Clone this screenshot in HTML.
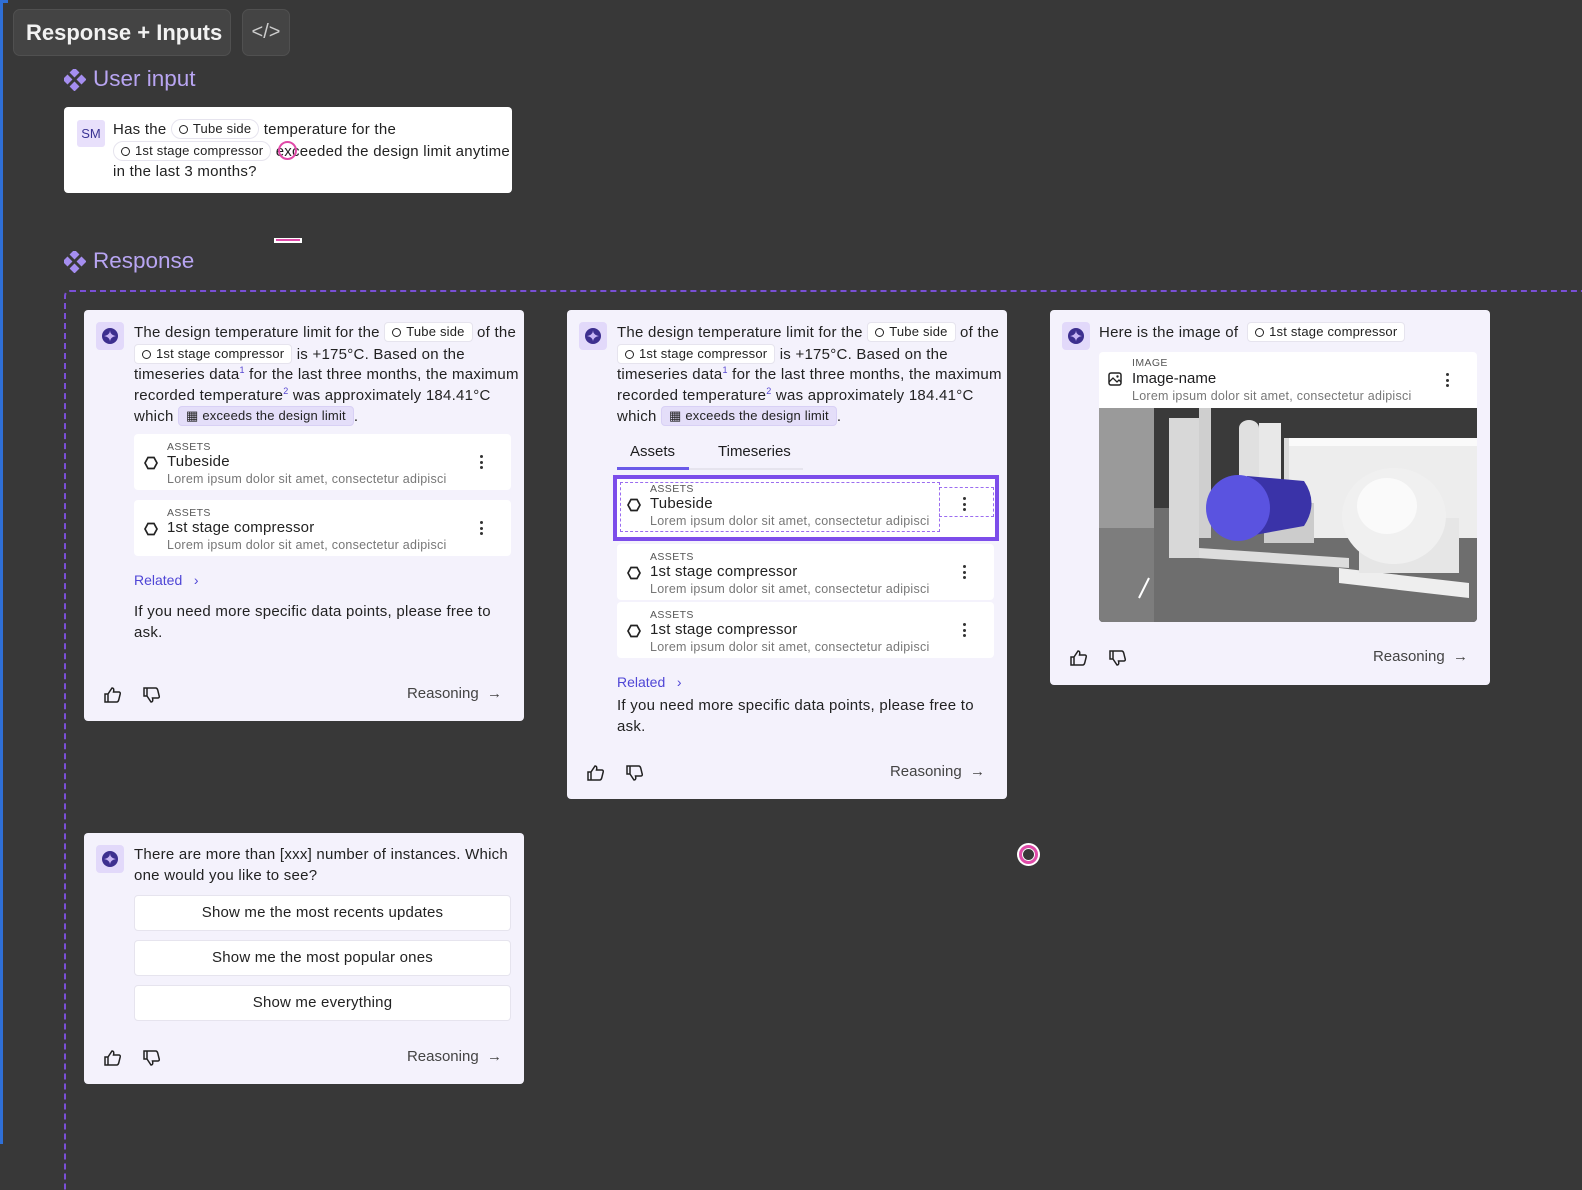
<!DOCTYPE html>
<html><head><meta charset="utf-8"><style>
*{box-sizing:border-box;margin:0;padding:0}
body{width:1582px;height:1144px;background:#383838;font-family:"Liberation Sans",sans-serif;position:relative;overflow:hidden;color:#1d1d1f}
.abs{position:absolute}
.card{position:absolute;background:#f4f2fc;border-radius:4px}
.av{position:absolute;left:12px;top:12px;width:28px;height:28px;background:#e2d9fa;border-radius:4px}
.txt{position:absolute;font-size:15px;letter-spacing:.25px;line-height:20.5px;color:#222;white-space:nowrap}
.chip{display:inline-block;background:#fff;border:1px solid #e6e4ee;border-radius:4px;padding:0 7px;font-size:13px;letter-spacing:.2px;line-height:18px;vertical-align:1px}
.chip i{display:inline-block;width:9px;height:9px;border:1.5px solid #222;border-radius:50%;margin-right:5px;vertical-align:-1px}
.chip.p{background:#e4def9;border-color:#d8d0f5}
sup{font-size:9px;color:#5546d0;line-height:0}
.item{position:absolute;background:#fff;border-radius:4px;height:56px}
.item .lab{position:absolute;left:33px;top:7px;font-size:10.5px;color:#555;letter-spacing:.4px}
.item .t{position:absolute;left:33px;top:19px;font-size:15px;letter-spacing:.2px;color:#222}
.item .d{position:absolute;left:33px;top:38px;font-size:12.5px;letter-spacing:.25px;color:#777;white-space:nowrap}
.item .hx{position:absolute;left:10px;top:22px}
.item .dots{position:absolute;right:28px;top:21px;width:3px}
.item .dots b{display:block;width:3px;height:3px;background:#333;border-radius:50%;margin-bottom:2.5px}
.rel{position:absolute;font-size:14px;color:#4f46d6}
.foot{position:absolute;left:0;right:0;height:20px}
.reas{position:absolute;right:22px;top:0;font-size:15px;color:#444}
.btn{position:absolute;left:50px;width:377px;height:36px;background:#fff;border:1px solid #e6e4ee;border-radius:4px;text-align:center;line-height:34px;font-size:15px;letter-spacing:.2px;color:#222}
</style></head><body>
<div class="abs" style="left:0;top:0;width:3px;height:1144px;background:#2f6fd6"></div>
<div class="abs" style="left:0;top:0;width:8px;height:3px;background:#2f6fd6"></div>
<div class="abs" style="left:13px;top:9px;width:218px;height:47px;background:#444;border:1px solid #505050;border-radius:7px;color:#f2f2f2;font-size:22px;line-height:45px;padding-left:12px;font-weight:600">Response + Inputs</div>
<div class="abs" style="left:242px;top:9px;width:48px;height:47px;background:#444;border:1px solid #505050;border-radius:7px;color:#ccc;font-size:20px;line-height:45px;text-align:center">&lt;/&gt;</div>

<svg class="abs" style="left:64px;top:69px" width="22" height="22" viewBox="0 0 22 22"><g fill="#a58ef0"><rect x="7" y="0" width="7" height="7" transform="rotate(45 10.5 3.5)"/><rect x="7" y="14" width="7" height="7" transform="rotate(45 10.5 17.5)"/><rect x="0" y="7" width="7" height="7" transform="rotate(45 3.5 10.5)"/><rect x="14" y="7" width="7" height="7" transform="rotate(45 17.5 10.5)"/></g></svg>
<div class="abs" style="left:93px;top:66px;font-size:22.5px;color:#b8a5f2">User input</div>

<div class="abs" style="left:64px;top:107px;width:448px;height:86px;background:#fff;border-radius:4px">
<div class="abs" style="left:13px;top:13px;width:28px;height:27px;background:#e8e0fb;border-radius:3px;font-size:13px;color:#3b3494;text-align:center;line-height:27px">SM</div>
<div class="txt" style="left:49px;top:12px">Has the <span class="chip" style="border-radius:10px"><i></i>Tube side</span> temperature for the<br><span class="chip" style="border-radius:10px"><i></i>1st stage compressor</span> exceeded the design limit anytime<br>in the last 3 months?</div>
</div>
<div class="abs" style="left:278px;top:141px;width:19px;height:19px;border:2px solid #e04aa8;border-radius:50%"></div>
<div class="abs" style="left:274px;top:238px;width:28px;height:5px;background:#fff"></div>
<div class="abs" style="left:276px;top:239px;width:24px;height:2px;background:#e04aa8"></div>

<svg class="abs" style="left:64px;top:251px" width="22" height="22" viewBox="0 0 22 22"><g fill="#a58ef0"><rect x="7" y="0" width="7" height="7" transform="rotate(45 10.5 3.5)"/><rect x="7" y="14" width="7" height="7" transform="rotate(45 10.5 17.5)"/><rect x="0" y="7" width="7" height="7" transform="rotate(45 3.5 10.5)"/><rect x="14" y="7" width="7" height="7" transform="rotate(45 17.5 10.5)"/></g></svg>
<div class="abs" style="left:93px;top:248px;font-size:22.5px;color:#b8a5f2">Response</div>

<div class="abs" style="left:64px;top:290px;width:1530px;height:900px;border:2px dashed #7a4fd6;border-right:none;border-bottom:none;border-top-left-radius:6px"></div>

<!-- Card 1 -->
<div class="card" style="left:84px;top:310px;width:440px;height:411px">
<div class="av"><svg width="28" height="28"><circle cx="14" cy="14" r="8" fill="#3d2f8f"/><path d="M8 14 Q14 13 14 8 Q14 13 20 14 Q14 15 14 20 Q14 15 8 14Z" fill="#c8b5f5"/></svg></div>
<div class="txt" style="left:50px;top:12px">The design temperature limit for the <span class="chip"><i></i>Tube side</span> of the<br><span class="chip"><i></i>1st stage compressor</span> is +175°C. Based on the<br>timeseries data<sup>1</sup> for the last three months, the maximum<br>recorded temperature<sup>2</sup> was approximately 184.41°C<br>which <span class="chip p">▦ exceeds the design limit</span>.</div>
<div class="item" style="left:50px;top:124px;width:377px"><svg class="hx" width="14" height="14"><polygon points="4,1.5 10,1.5 13,7 10,12.5 4,12.5 1,7" fill="none" stroke="#222" stroke-width="1.7"/></svg><div class="lab">ASSETS</div><div class="t">Tubeside</div><div class="d">Lorem ipsum dolor sit amet, consectetur adipisci</div><div class="dots"><b></b><b></b><b></b></div></div>
<div class="item" style="left:50px;top:190px;width:377px"><svg class="hx" width="14" height="14"><polygon points="4,1.5 10,1.5 13,7 10,12.5 4,12.5 1,7" fill="none" stroke="#222" stroke-width="1.7"/></svg><div class="lab">ASSETS</div><div class="t">1st stage compressor</div><div class="d">Lorem ipsum dolor sit amet, consectetur adipisci</div><div class="dots"><b></b><b></b><b></b></div></div>
<div class="rel" style="left:50px;top:262px">Related &nbsp;&nbsp;›</div>
<div class="txt" style="left:50px;top:292px">If you need more specific data points, please free to<br>ask.</div>
<div class="foot" style="top:375px">
<svg class="abs" style="left:20px;top:2px" width="18" height="16" viewBox="0 0 18 16"><path d="M1 7h3v8H1zM4 7l4-6c2 0 2 2 1.5 4H15c1 0 1.5 1 1.2 2l-1.5 6c-.3 1-1 2-2 2H4" fill="none" stroke="#222" stroke-width="1.5"/></svg>
<svg class="abs" style="left:59px;top:2px" width="18" height="16" viewBox="0 0 18 16"><path d="M1 1h3v8H1zM4 9l4 6c2 0 2-2 1.5-4H15c1 0 1.5-1 1.2-2l-1.5-6c-.3-1-1-2-2-2H4" fill="none" stroke="#222" stroke-width="1.5"/></svg>
<div class="reas">Reasoning &nbsp;→</div></div>
</div>

<!-- Card 2 -->
<div class="card" style="left:567px;top:310px;width:440px;height:489px">
<div class="av"><svg width="28" height="28"><circle cx="14" cy="14" r="8" fill="#3d2f8f"/><path d="M8 14 Q14 13 14 8 Q14 13 20 14 Q14 15 14 20 Q14 15 8 14Z" fill="#c8b5f5"/></svg></div>
<div class="txt" style="left:50px;top:12px">The design temperature limit for the <span class="chip"><i></i>Tube side</span> of the<br><span class="chip"><i></i>1st stage compressor</span> is +175°C. Based on the<br>timeseries data<sup>1</sup> for the last three months, the maximum<br>recorded temperature<sup>2</sup> was approximately 184.41°C<br>which <span class="chip p">▦ exceeds the design limit</span>.</div>
<div class="abs" style="left:63px;top:133px;font-size:15px">Assets</div>
<div class="abs" style="left:151px;top:133px;font-size:15px">Timeseries</div>
<div class="abs" style="left:50px;top:158px;width:186px;height:2px;background:#e6e4ee"></div>
<div class="abs" style="left:50px;top:157px;width:72px;height:3px;background:#6a5ae8"></div>
<div class="abs" style="left:46px;top:165px;width:386px;height:66px;background:#fff;border:4px solid #7c4dea"></div>
<div class="abs" style="left:53px;top:172px;width:320px;height:50px;border:1.5px dashed #9b6cf0"></div>
<div class="abs" style="left:372px;top:177px;width:55px;height:30px;border:1.5px dashed #9b6cf0"></div>
<div class="item" style="left:50px;top:166px;width:377px;background:transparent"><svg class="hx" width="14" height="14"><polygon points="4,1.5 10,1.5 13,7 10,12.5 4,12.5 1,7" fill="none" stroke="#222" stroke-width="1.7"/></svg><div class="lab">ASSETS</div><div class="t">Tubeside</div><div class="d">Lorem ipsum dolor sit amet, consectetur adipisci</div><div class="dots"><b></b><b></b><b></b></div></div>
<div class="item" style="left:50px;top:234px;width:377px"><svg class="hx" width="14" height="14"><polygon points="4,1.5 10,1.5 13,7 10,12.5 4,12.5 1,7" fill="none" stroke="#222" stroke-width="1.7"/></svg><div class="lab">ASSETS</div><div class="t">1st stage compressor</div><div class="d">Lorem ipsum dolor sit amet, consectetur adipisci</div><div class="dots"><b></b><b></b><b></b></div></div>
<div class="item" style="left:50px;top:292px;width:377px"><svg class="hx" width="14" height="14"><polygon points="4,1.5 10,1.5 13,7 10,12.5 4,12.5 1,7" fill="none" stroke="#222" stroke-width="1.7"/></svg><div class="lab">ASSETS</div><div class="t">1st stage compressor</div><div class="d">Lorem ipsum dolor sit amet, consectetur adipisci</div><div class="dots"><b></b><b></b><b></b></div></div>
<div class="rel" style="left:50px;top:364px">Related &nbsp;&nbsp;›</div>
<div class="txt" style="left:50px;top:386px">If you need more specific data points, please free to<br>ask.</div>
<div class="foot" style="top:453px">
<svg class="abs" style="left:20px;top:2px" width="18" height="16" viewBox="0 0 18 16"><path d="M1 7h3v8H1zM4 7l4-6c2 0 2 2 1.5 4H15c1 0 1.5 1 1.2 2l-1.5 6c-.3 1-1 2-2 2H4" fill="none" stroke="#222" stroke-width="1.5"/></svg>
<svg class="abs" style="left:59px;top:2px" width="18" height="16" viewBox="0 0 18 16"><path d="M1 1h3v8H1zM4 9l4 6c2 0 2-2 1.5-4H15c1 0 1.5-1 1.2-2l-1.5-6c-.3-1-1-2-2-2H4" fill="none" stroke="#222" stroke-width="1.5"/></svg>
<div class="reas">Reasoning &nbsp;→</div></div>
</div>

<!-- Card 3 -->
<div class="card" style="left:1050px;top:310px;width:440px;height:375px">
<div class="av"><svg width="28" height="28"><circle cx="14" cy="14" r="8" fill="#3d2f8f"/><path d="M8 14 Q14 13 14 8 Q14 13 20 14 Q14 15 14 20 Q14 15 8 14Z" fill="#c8b5f5"/></svg></div>
<div class="txt" style="left:49px;top:12px">Here is the image of &nbsp;<span class="chip"><i></i>1st stage compressor</span></div>
<div class="abs" style="left:49px;top:42px;width:378px;height:270px;background:#fff;border-radius:4px;overflow:hidden">
<svg class="abs" style="left:9px;top:20px" width="14" height="14" viewBox="0 0 14 14"><rect x="1" y="1" width="12" height="12" rx="2" fill="none" stroke="#222" stroke-width="1.5"/><path d="M1 10l4-4 4 4 2-2 2 2" fill="none" stroke="#222" stroke-width="1.3"/><circle cx="9.5" cy="4.5" r="1.2" fill="#222"/></svg>
<div class="abs" style="left:33px;top:5px;font-size:10.5px;color:#555;letter-spacing:.4px">IMAGE</div>
<div class="abs" style="left:33px;top:18px;font-size:15px">Image-name</div>
<div class="abs" style="left:33px;top:37px;font-size:12.5px;letter-spacing:.25px;color:#777;white-space:nowrap">Lorem ipsum dolor sit amet, consectetur adipisci</div>
<div class="abs" style="right:28px;top:21px;width:3px"><b style="display:block;width:3px;height:3px;background:#333;border-radius:50%;margin-bottom:2.5px"></b><b style="display:block;width:3px;height:3px;background:#333;border-radius:50%;margin-bottom:2.5px"></b><b style="display:block;width:3px;height:3px;background:#333;border-radius:50%"></b></div>
<svg class="abs" style="left:0;top:56px" width="378" height="214" viewBox="0 0 378 214">
<rect width="378" height="214" fill="#3a3a3a"/>
<rect y="100" width="378" height="114" fill="#6e6e6e"/>
<rect x="0" y="0" width="55" height="165" fill="#9a9a9a"/>
<rect x="0" y="120" width="55" height="94" fill="#7d7d7d"/>
<rect x="70" y="10" width="30" height="140" fill="#d8d8d8"/>
<rect x="100" y="0" width="12" height="130" fill="#cfcfcf"/>
<rect x="140" y="20" width="20" height="80" fill="#e0e0e0"/>
<ellipse cx="150" cy="20" rx="10" ry="8" fill="#e0e0e0"/>
<rect x="160" y="15" width="22" height="80" fill="#e8e8e8"/>
<rect x="185" y="30" width="20" height="70" fill="#dcdcdc"/>
<rect x="190" y="30" width="188" height="100" fill="#ededed"/>
<rect x="190" y="30" width="188" height="8" fill="#fafafa"/>
<polygon points="100,140 250,150 250,160 100,150" fill="#ddd"/>
<polygon points="240,160 370,175 370,190 240,175" fill="#eee"/>
<rect x="165" y="95" width="50" height="40" fill="#ccc"/>
<path d="M148 68 L205 73 Q220 95 205 118 L150 128 Z" fill="#3a33a8"/>
<ellipse cx="139" cy="100" rx="32" ry="33" fill="#5a53e0"/>
<rect x="260" y="110" width="100" height="55" fill="#e6e6e6"/>
<ellipse cx="295" cy="108" rx="52" ry="48" fill="#f0f0f0"/>
<ellipse cx="288" cy="98" rx="30" ry="28" fill="#fafafa"/>
<line x1="40" y1="190" x2="50" y2="170" stroke="#fff" stroke-width="2"/>
</svg>
</div>
<div class="foot" style="top:338px">
<svg class="abs" style="left:20px;top:2px" width="18" height="16" viewBox="0 0 18 16"><path d="M1 7h3v8H1zM4 7l4-6c2 0 2 2 1.5 4H15c1 0 1.5 1 1.2 2l-1.5 6c-.3 1-1 2-2 2H4" fill="none" stroke="#222" stroke-width="1.5"/></svg>
<svg class="abs" style="left:59px;top:2px" width="18" height="16" viewBox="0 0 18 16"><path d="M1 1h3v8H1zM4 9l4 6c2 0 2-2 1.5-4H15c1 0 1.5-1 1.2-2l-1.5-6c-.3-1-1-2-2-2H4" fill="none" stroke="#222" stroke-width="1.5"/></svg>
<div class="reas">Reasoning &nbsp;→</div></div>
</div>

<!-- Card 4 -->
<div class="card" style="left:84px;top:833px;width:440px;height:251px">
<div class="av"><svg width="28" height="28"><circle cx="14" cy="14" r="8" fill="#3d2f8f"/><path d="M8 14 Q14 13 14 8 Q14 13 20 14 Q14 15 14 20 Q14 15 8 14Z" fill="#c8b5f5"/></svg></div>
<div class="txt" style="left:50px;top:12px">There are more than [xxx] number of instances. Which<br>one would you like to see?</div>
<div class="btn" style="top:62px">Show me the most recents updates</div>
<div class="btn" style="top:107px">Show me the most popular ones</div>
<div class="btn" style="top:152px">Show me everything</div>
<div class="foot" style="top:215px">
<svg class="abs" style="left:20px;top:2px" width="18" height="16" viewBox="0 0 18 16"><path d="M1 7h3v8H1zM4 7l4-6c2 0 2 2 1.5 4H15c1 0 1.5 1 1.2 2l-1.5 6c-.3 1-1 2-2 2H4" fill="none" stroke="#222" stroke-width="1.5"/></svg>
<svg class="abs" style="left:59px;top:2px" width="18" height="16" viewBox="0 0 18 16"><path d="M1 1h3v8H1zM4 9l4 6c2 0 2-2 1.5-4H15c1 0 1.5-1 1.2-2l-1.5-6c-.3-1-1-2-2-2H4" fill="none" stroke="#222" stroke-width="1.5"/></svg>
<div class="reas">Reasoning &nbsp;→</div></div>
</div>

<div class="abs" style="left:1017px;top:843px;width:23px;height:23px;border-radius:50%;background:#fff"></div>
<div class="abs" style="left:1019px;top:845px;width:19px;height:19px;border:3px solid #e04aa8;border-radius:50%;background:#383838"></div>
<div class="abs" style="left:1022px;top:848px;width:13px;height:13px;border:1px solid #fff;border-radius:50%"></div>
</body></html>
